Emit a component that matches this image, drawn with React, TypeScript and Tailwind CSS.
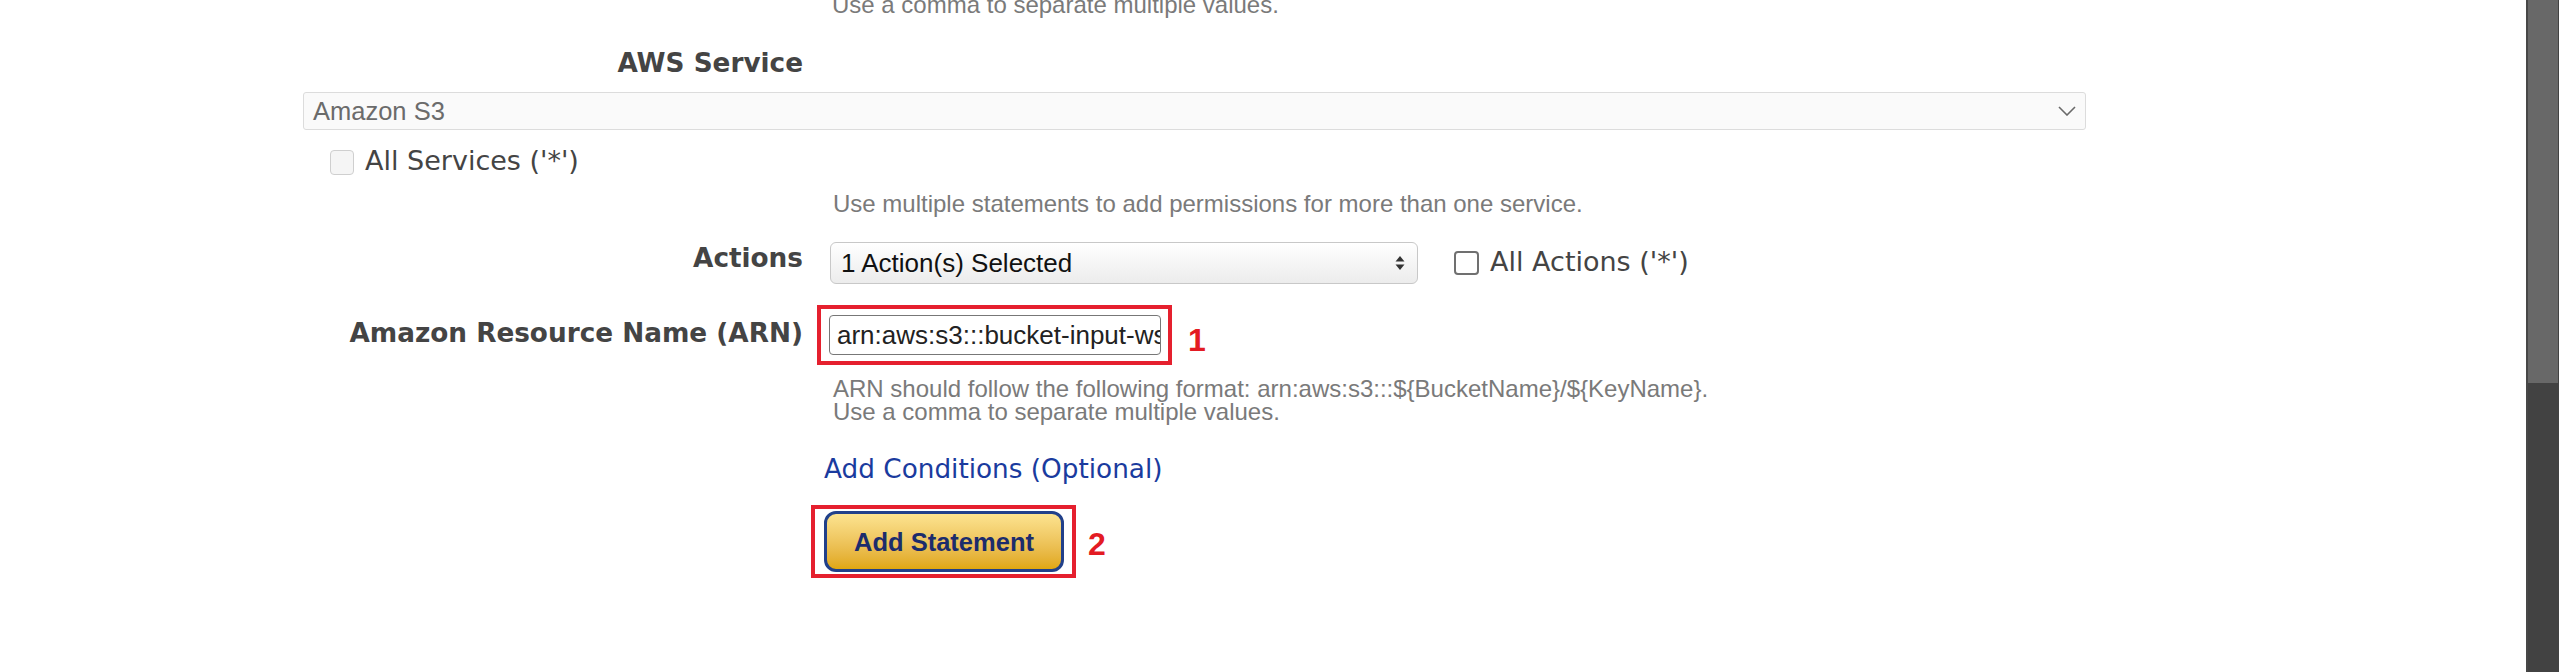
import * as React from "react";

/* ─── small pieces ─────────────────────────────── */
const verdana = "font-['DejaVu_Sans',Verdana,sans-serif]";
const tahoma = "font-['Liberation_Sans',Arial,sans-serif]";

function HelpText({ children }: { children: React.ReactNode }) {
  return (
    <div className={`${tahoma} pl-[3px] text-[24px] leading-[23px] text-[#7a7a7a]`}>
      {children}
    </div>
  );
}

function Label({ children, className = "" }: { children: React.ReactNode; className?: string }) {
  return (
    <div
      className={`${verdana} w-[500px] shrink-0 text-right text-[26.3px] leading-[30px] font-bold text-[#444] ${className}`}
    >
      {children}
    </div>
  );
}

function Marker({ n, className = "" }: { n: string; className?: string }) {
  return (
    <span className={`font-['Liberation_Sans',Arial,sans-serif] text-[32px] leading-[32px] font-bold text-[#e31b23] ${className}`}>
      {n}
    </span>
  );
}

/* ─── page ─────────────────────────────────────── */
export default function App() {
  return (
    <div className="flex h-[672px] w-full overflow-hidden bg-white">
      <div className="flex-1 pl-[303px]">
        {/* leftover help from the row above */}
        <div className="ml-[527px] mt-[-9px] leading-[28px]">
          <div className={`${tahoma} pl-[2px] text-[24px] leading-[28px] text-[#7a7a7a]`}>
            Use a comma to separate multiple values.
          </div>
        </div>

        {/* AWS Service */}
        <Label className="mt-[29px]">AWS Service</Label>
        <div className="mt-[14px] flex h-[38px] w-[1783px] items-center justify-between rounded-[3px] border border-[#dcdcdc] bg-[#fafafa] pl-[9px] pr-[9px]">
          <span className={`${tahoma} text-[25.5px] leading-[30px] text-[#6b6b6b]`}>Amazon S3</span>
          <svg width="18" height="10" viewBox="0 0 18 10" fill="none">
            <path d="M1 1 L9 9 L17 1" stroke="#6a6a6a" strokeWidth="1.6" />
          </svg>
        </div>

        <div className="mt-[16px] flex items-start pl-[27px]">
          <span className="mt-[4px] h-[25px] w-[24px] rounded-[4px] border border-[#cfcfcf] bg-[#f5f5f5]" />
          <span className={`${verdana} ml-[11px] text-[27px] leading-[30px] text-[#444]`}>
            All Services ('*')
          </span>
        </div>

        <div className="mt-[14px] ml-[527px]">
          <div className={`${tahoma} pl-[3px] text-[24px] leading-[28px] text-[#7a7a7a]`}>
            Use multiple statements to add permissions for more than one service.
          </div>
        </div>

        {/* Actions */}
        <div className="mt-[24px] flex items-start gap-[27px]">
          <Label className="mt-[1px]">Actions</Label>
          <div className="flex h-[42px] w-[588px] items-center justify-between rounded-[6px] border border-[#c8c8c8] bg-gradient-to-b from-white to-[#ececec] pl-[10px] pr-[12px]">
            <span className={`${tahoma} text-[26px] leading-[42px] text-[#111]`}>1 Action(s) Selected</span>
            <svg width="10" height="14" viewBox="0 0 10 14">
              <path d="M5 0 L9.5 5.5 H0.5 Z" fill="#333" />
              <path d="M5 14 L9.5 8.5 H0.5 Z" fill="#333" />
            </svg>
          </div>
          <div className="ml-[9px] flex items-start">
            <span className="mt-[9px] h-[24px] w-[25px] rounded-[4px] border-2 border-[#707070] bg-white" />
            <span className={`${verdana} ml-[11px] mt-[5px] text-[27px] leading-[30px] text-[#444]`}>
              All Actions ('*')
            </span>
          </div>
        </div>

        {/* ARN */}
        <div className="mt-[21px] flex items-start gap-[27px]">
          <Label className="mt-[13px]">Amazon Resource Name (ARN)</Label>
          <div className="ml-[-13px] flex items-start">
            <div className="h-[60px] w-[355px] border-4 border-[#e5202e] pb-[6px] pl-[8px] pr-[7px] pt-[6px]">
              <div className="flex h-[40px] items-center rounded-[4px] border-[1.5px] border-[#777] bg-white pl-[7px]">
                <span className={`${tahoma} block w-full overflow-hidden whitespace-nowrap text-[26px] leading-[30px] text-[#222]`}>
                  arn:aws:s3:::bucket-input-ws-demo/*
                </span>
              </div>
            </div>
            <Marker n="1" className="ml-[16px] mt-[19px]" />
          </div>
        </div>

        <div className="mt-[12px] ml-[527px]">
          <HelpText>
            ARN should follow the following format: arn:aws:s3:::$&#123;BucketName&#125;/$&#123;KeyName&#125;.
          </HelpText>
          <HelpText>Use a comma to separate multiple values.</HelpText>
        </div>

        {/* conditions + submit */}
        <div className="ml-[521px] mt-[31px]">
          <span className={`${verdana} text-[26.3px] leading-[30px] text-[#1a3b9e]`}>
            Add Conditions (Optional)
          </span>
        </div>

        <div className="ml-[508px] mt-[21px] flex items-start">
          <div className="border-4 border-[#e5202e] pb-[2px] pl-[9px] pr-[8px] pt-[2px]">
            <div className="flex h-[61px] w-[240px] items-center justify-center rounded-[12px] border-[3px] border-[#21408a] bg-gradient-to-b from-[#fce38f] to-[#e0a70c]">
              <span className="font-['Liberation_Sans',Arial,sans-serif] text-[25.5px] leading-[30px] font-bold text-[#1c2c6c]">
                Add Statement
              </span>
            </div>
          </div>
          <Marker n="2" className="ml-[12px] mt-[23px]" />
        </div>
      </div>

      {/* scrollbar */}
      <div className="w-[33px] shrink-0 border-l-2 border-[#474747] bg-[#424242]">
        <div className="h-[383px] w-[30px] bg-[#686868]" />
      </div>
    </div>
  );
}
